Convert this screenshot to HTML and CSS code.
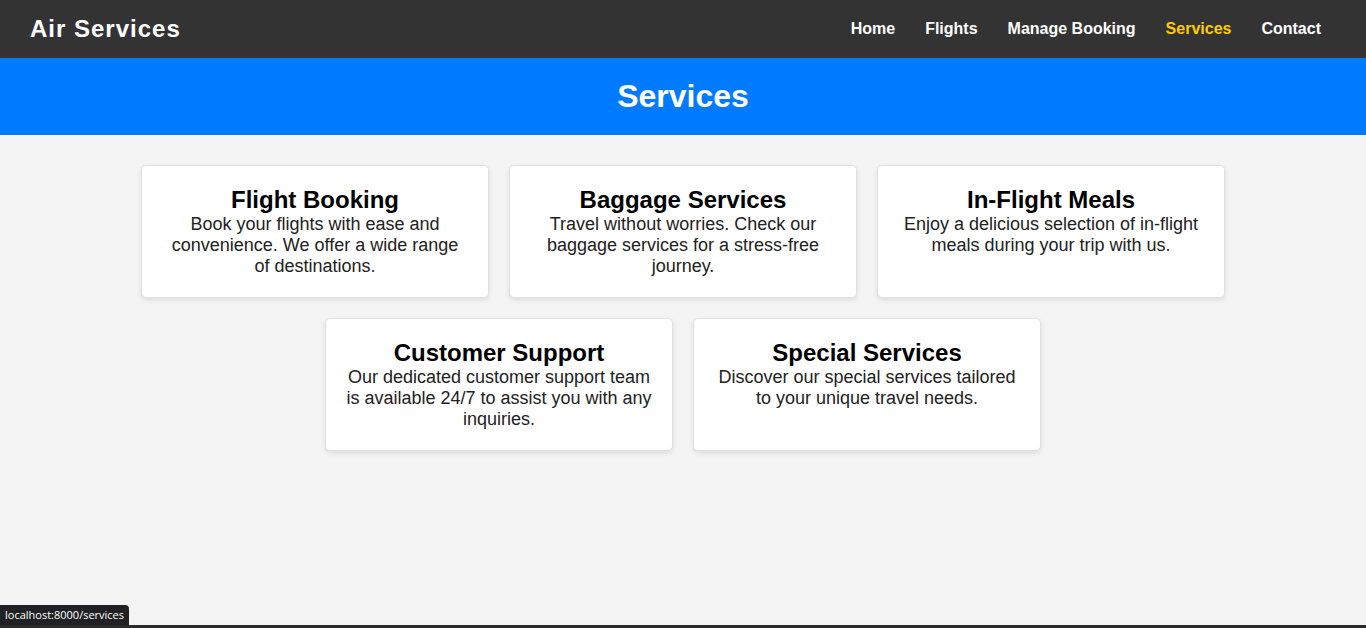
FILE: index.html
```html
<!DOCTYPE html>
<html lang="en">
<head>
<meta charset="utf-8">
<title>Services - Air Services</title>
<link rel="stylesheet" href="styles.css">
</head>
<body>
<header class="site-header">
  <h1 class="logo">Air Services</h1>
  <nav class="nav">
    <a href="#" class="nav-link">Home</a>
    <a href="#" class="nav-link">Flights</a>
    <a href="#" class="nav-link">Manage Booking</a>
    <a href="#" class="nav-link active">Services</a>
    <a href="#" class="nav-link">Contact</a>
  </nav>
</header>
<section class="banner">
  <h2 class="banner-title">Services</h2>
</section>
<main class="services">
  <div class="card">
    <h3 class="card-title">Flight Booking</h3>
    <p class="card-text">Book your flights with ease and convenience. We offer a wide range of destinations.</p>
  </div>
  <div class="card">
    <h3 class="card-title">Baggage Services</h3>
    <p class="card-text">Travel without worries. Check our baggage services for a stress-free journey.</p>
  </div>
  <div class="card">
    <h3 class="card-title">In-Flight Meals</h3>
    <p class="card-text">Enjoy a delicious selection of in-flight meals during your trip with us.</p>
  </div>
  <div class="card">
    <h3 class="card-title">Customer Support</h3>
    <p class="card-text">Our dedicated customer support team is available 24/7 to assist you with any inquiries.</p>
  </div>
  <div class="card">
    <h3 class="card-title">Special Services</h3>
    <p class="card-text">Discover our special services tailored to your unique travel needs.</p>
  </div>
</main>
<div class="status-tip">localhost:8000/services</div>
<div class="bottom-strip"></div>
</body>
</html>
```
FILE: styles.css
```css
* { box-sizing: border-box; }
html, body { margin: 0; padding: 0; }
body {
  font-family: "Liberation Sans", Arial, sans-serif;
  background: #f4f4f4;
  color: #000;
  min-height: 628px;
}
.site-header {
  background: #333;
  height: 58px;
  display: flex;
  align-items: center;
  justify-content: space-between;
  padding: 0 30px;
}
.logo {
  margin: 0;
  color: #fff;
  font-size: 24px;
  font-weight: bold;
  letter-spacing: 1px;
}
.nav { display: flex; }
.nav-link {
  color: #fff;
  text-decoration: none;
  font-weight: bold;
  font-size: 16px;
  padding: 0 15px;
}
.nav-link.active { color: #ffcc00; }
.banner {
  background: #007bff;
  padding: 20px;
  text-align: center;
}
.banner-title {
  margin: 0;
  color: #fff;
  font-size: 32px;
  font-weight: bold;
}
.services {
  display: flex;
  flex-wrap: wrap;
  justify-content: center;
  gap: 20px 20px;
  padding-top: 30px;
  max-width: 1100px;
  margin: 0 auto;
}
.card {
  width: 348px;
  background: #fff;
  border: 1px solid #e2e2e2;
  border-radius: 5px;
  box-shadow: 0 2px 5px rgba(0, 0, 0, 0.1);
  padding: 20px;
  text-align: center;
}
.card-title {
  margin: 0;
  font-size: 24px;
  font-weight: bold;
}
.card-text {
  margin: 0;
  font-size: 18px;
  color: #222;
}
.status-tip {
  position: fixed;
  left: 0;
  bottom: 3px;
  height: 20px;
  padding: 0 5px;
  background: #202124;
  color: #fff;
  font-family: "Open Sans", "Noto Sans", sans-serif;
  font-size: 11px;
  line-height: 20px;
  border-top-right-radius: 4px;
}
.bottom-strip {
  position: fixed;
  left: 0;
  right: 0;
  bottom: 0;
  height: 3px;
  background: #2a2a2a;
}
```
